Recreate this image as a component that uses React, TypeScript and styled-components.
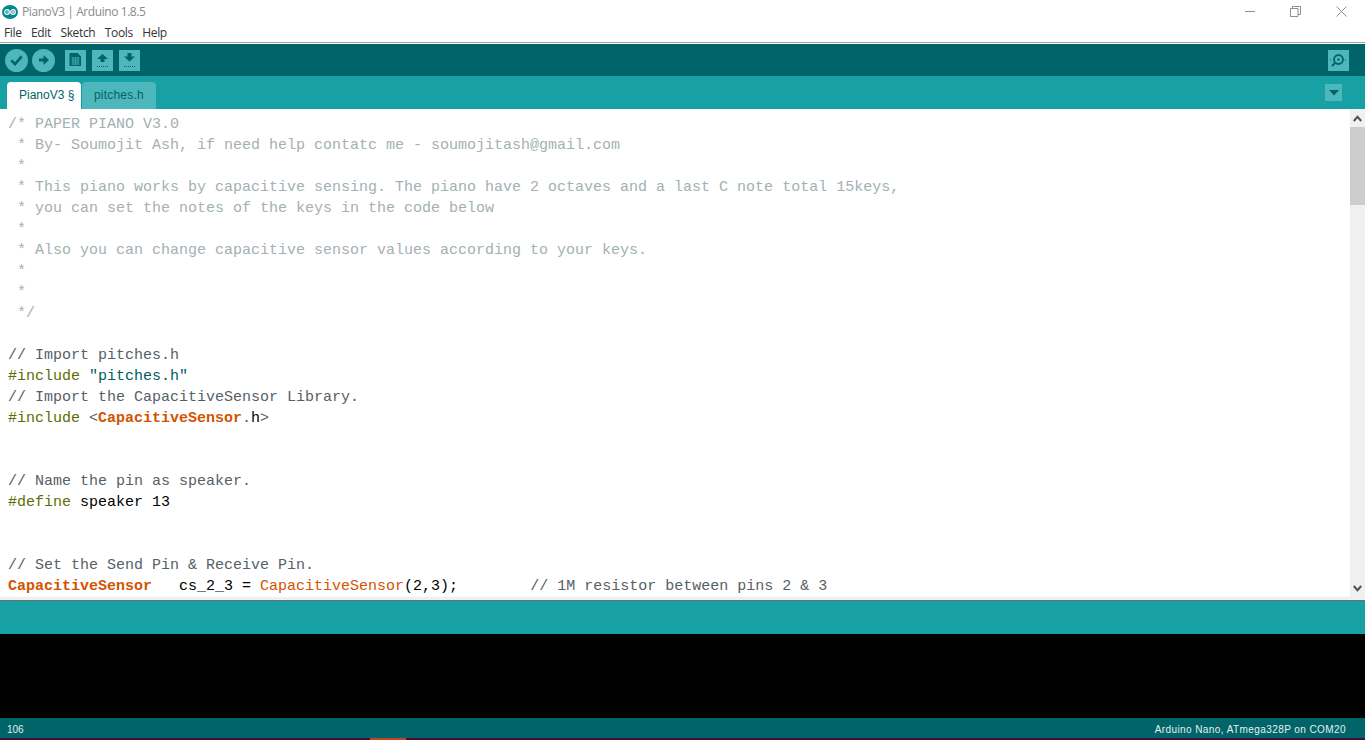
import React from "react";
import styled, { createGlobalStyle } from "styled-components";

const Global = createGlobalStyle`
  html, body { margin: 0; padding: 0; background: #fff; overflow: hidden; }
  #root { width: 1365px; height: 740px; }
`;
const Page = styled.div`
  width: 1365px; height: 740px; display: flex; flex-direction: column; overflow: hidden;
`;
const TitleBar = styled.div`
  height: 22px; display: flex; align-items: center; justify-content: space-between; flex: none;
`;
const TitleLeft = styled.div`
  display: flex; align-items: center; gap: 4px; padding: 1px 0 0 2px;
  font: 12px "Open Sans", "Noto Sans", sans-serif; color: #8a8a8a; letter-spacing: -0.42px;
`;
const WindowButtons = styled.div`
  display: flex; align-items: center; height: 22px; padding-right: 1px;
`;
const WinBtn = styled.div`
  width: 45.500px; height: 22px; display: flex; align-items: center; justify-content: center; color: #8f8f8f;
`;
const MenuBar = styled.div`
  height: 20px; flex: none; display: flex; gap: 9.500px; align-items: center; padding-left: 4px;
  font: 12px "Open Sans", "Noto Sans", sans-serif; color: #333; letter-spacing: -0.36px;
  border-bottom: 1px solid #a0a0a0; box-sizing: content-box;
`;
const Toolbar = styled.div`
  height: 32px; flex: none; margin-top: 1px; background: #006468; display: flex; align-items: center; padding: 0 16px 0 5px;
`;
const Round = styled.div`
  width: 23px; height: 23px; border-radius: 50%; background: #4db7bb; margin-right: 4px;
  display: flex; align-items: center; justify-content: center; flex: none;
`;
const Square = styled.div<{ $first?: boolean; $last?: boolean }>`
  width: 21px; height: 21px; background: #4db7bb;
  margin-right: ${p => (p.$last ? "0" : "6px")}; margin-left: ${p => (p.$first ? "6px" : "0")};
  display: flex; align-items: center; justify-content: center; flex: none;
`;
const Spacer = styled.div`flex: 1;`;
const TabBar = styled.div`
  height: 33px; flex: none; background: #17a1a5; display: flex; align-items: flex-end; padding: 0 23px 0 7px; position: relative;
`;
const Tab = styled.div<{ $active?: boolean }>`
  width: 74px; height: 27px; margin-right: 1px; border-radius: 4px 4px 0 0; box-sizing: border-box;
  padding-left: 12px;
  background: ${p => (p.$active ? "#fff" : "#4db7bb")}; color: #006468;
  font: 12px/26px "Liberation Sans", Arial, sans-serif; letter-spacing: ${p => (p.$active ? "0" : "0.2px")};
`;
const TabMenu = styled.div`
  width: 17px; height: 17px; background: #4db7bb; margin-left: auto; align-self: flex-start; margin-top: 8px;
  display: flex; align-items: center; justify-content: center;
`;
const EditorArea = styled.div`
  height: 488px; flex: none; display: flex; background: #fff; overflow: hidden;
`;
const Code = styled.div`
  flex: 1; padding: 5px 0 0 8px; overflow: hidden;
  font: 15px/21px "Liberation Mono", "Courier New", monospace; color: #000; white-space: pre;
`;
const CodeLine = styled.div`height: 21px;`;
const Comment = styled.span`color: #a3b1b2;`;
const LineComment = styled.span`color: #566166;`;
const Dir = styled.span`color: #5e6d03;`;
const Str = styled.span`color: #005c5f;`;
const Lib = styled.span`color: #d35400; font-weight: 700;`;
const Fn = styled.span`color: #d35400;`;
const Scrollbar = styled.div`
  width: 15px; flex: none; background: #f0f0f0; display: flex; flex-direction: column;
`;
const ScrollBtn = styled.div`
  height: 18px; flex: none; display: flex; align-items: center; justify-content: center;
`;
const Thumb = styled.div`height: 78px; background: #cdcdcd; flex: none;`;
const Track = styled.div`flex: 1;`;
const Divider = styled.div`
  height: 3px; flex: none; background: #f0f0f0; border-bottom: 1px solid #6e6e6e; box-sizing: content-box;
`;
const Status = styled.div`height: 33px; flex: none; background: #17a1a5;`;
const Console = styled.div`height: 84px; flex: none; background: #000;`;
const Footer = styled.div`
  height: 20px; flex: none; background: #006468; display: flex; align-items: center; justify-content: space-between;
  padding: 2px 19px 0 7px; box-sizing: border-box; color: #e4f1f1;
  font: 10px "Liberation Sans", Arial, sans-serif;
`;
const BoardName = styled.span`letter-spacing: 0.42px;`;
const Taskbar = styled.div`
  height: 2px; flex: none; background: #4a0c33; display: flex; padding-left: 370px;
`;
const TaskItem = styled.div`width: 36px; background: #c0432a;`;

const Logo = () => (
  <svg width="16" height="16" viewBox="0 0 16 16">
    <ellipse cx="8" cy="8" rx="8" ry="7" fill="#00878f" />
    <circle cx="5" cy="8" r="2.300" fill="none" stroke="#fff" strokeWidth="1.200" />
    <circle cx="11" cy="8" r="2.300" fill="none" stroke="#fff" strokeWidth="1.200" />
    <path d="M4 8h2M10 8h2M11 7v2" stroke="#fff" strokeWidth="0.800" />
  </svg>
);
const Dots = () => <path d="M5 16.500h11" stroke="#006468" strokeWidth="1" strokeDasharray="1 1" fill="none" />;

const code: React.ReactNode[] = [
  <Comment>{"/* PAPER PIANO V3.0"}</Comment>,
  <Comment>{" * By- Soumojit Ash, if need help contatc me - soumojitash@gmail.com"}</Comment>,
  <Comment>{" *"}</Comment>,
  <Comment>{" * This piano works by capacitive sensing. The piano have 2 octaves and a last C note total 15keys,"}</Comment>,
  <Comment>{" * you can set the notes of the keys in the code below"}</Comment>,
  <Comment>{" *"}</Comment>,
  <Comment>{" * Also you can change capacitive sensor values according to your keys."}</Comment>,
  <Comment>{" *"}</Comment>,
  <Comment>{" *"}</Comment>,
  <Comment>{" */"}</Comment>,
  "",
  <LineComment>{"// Import pitches.h"}</LineComment>,
  <><Dir>#include</Dir> <Str>"pitches.h"</Str></>,
  <LineComment>{"// Import the CapacitiveSensor Library."}</LineComment>,
  <><Dir>#include</Dir> <LineComment>{"<"}</LineComment><Lib>CapacitiveSensor</Lib><LineComment>.</LineComment>h<LineComment>{">"}</LineComment></>,
  "",
  "",
  <LineComment>{"// Name the pin as speaker."}</LineComment>,
  <><Dir>#define</Dir> speaker 13</>,
  "",
  "",
  <LineComment>{"// Set the Send Pin & Receive Pin."}</LineComment>,
  <><Lib>CapacitiveSensor</Lib>   cs_2_3 = <Fn>CapacitiveSensor</Fn>(2,3);        <LineComment>{"// 1M resistor between pins 2 & 3"}</LineComment></>,
];

export default function App() {
  return (
    <Page>
      <Global />
      <TitleBar>
        <TitleLeft><Logo />PianoV3 | Arduino 1.8.5</TitleLeft>
        <WindowButtons>
          <WinBtn><svg width="11" height="11" viewBox="0 0 11 11"><path d="M0 5.500h10" stroke="currentColor" /></svg></WinBtn>
          <WinBtn><svg width="11" height="11" viewBox="0 0 11 11"><path d="M.5 2.500h7.500v8H.5zM2.500 2.500V.5h8v8H8" fill="none" stroke="currentColor" /></svg></WinBtn>
          <WinBtn><svg width="11" height="11" viewBox="0 0 11 11"><path d="M.5.5l10 10M10.500.5l-10 10" stroke="currentColor" /></svg></WinBtn>
        </WindowButtons>
      </TitleBar>
      <MenuBar>
        <span>File</span><span>Edit</span><span>Sketch</span><span>Tools</span><span>Help</span>
      </MenuBar>
      <Toolbar>
        <Round><svg width="13" height="11" viewBox="0 0 13 11"><path d="M1.300 5.300l3.700 3.700 6.700-7.700" fill="none" stroke="#006468" strokeWidth="2.600" /></svg></Round>
        <Round><svg width="10" height="10" viewBox="0 0 10 10"><path d="M0 3.500h4.500V0L10 5 4.500 10V6.500H0z" fill="#006468" /></svg></Round>
        <Square $first><svg width="21" height="21" viewBox="0 0 21 21"><path d="M4.500 3h8l3.500 3.500V16H4.500z" fill="#006468" /><path d="M6.500 8h8M6.500 10h8M6.500 12h8M6.500 14h8M8 7v8M10.500 7v8M13 7v8" stroke="#4db7bb" strokeWidth="0.700" /></svg></Square>
        <Square><svg width="21" height="21" viewBox="0 0 21 21"><path d="M10.500 4l5.500 5h-3.500v3h-4V9H5z" fill="#006468" /><Dots /></svg></Square>
        <Square><svg width="21" height="21" viewBox="0 0 21 21"><path d="M8.500 3h4v3.500H16l-5.500 5-5.500-5h3.500z" fill="#006468" /><Dots /></svg></Square>
        <Spacer />
        <Square $last>
          <svg width="21" height="21" viewBox="0 0 21 21"><circle cx="10.500" cy="9.500" r="4.500" fill="none" stroke="#006468" strokeWidth="1.800" /><circle cx="10.500" cy="9.500" r="1.200" fill="#006468" /><path d="M7 13l-3 3" stroke="#006468" strokeWidth="2.200" /><path d="M2 10h2M17 10h2" stroke="#006468" strokeDasharray="1 1" /></svg>
        </Square>
      </Toolbar>
      <TabBar>
        <Tab $active>PianoV3 §</Tab>
        <Tab>pitches.h</Tab>
        <TabMenu><svg width="10" height="6" viewBox="0 0 10 6"><path d="M0 0h10L5 5.500z" fill="#006468" /></svg></TabMenu>
      </TabBar>
      <EditorArea>
        <Code>{code.map((c, i) => <CodeLine key={i}>{c}</CodeLine>)}</Code>
        <Scrollbar>
          <ScrollBtn><svg width="9" height="7" viewBox="0 0 9 7"><path d="M.8 6l3.700-4.200L8.200 6" fill="none" stroke="#505050" strokeWidth="2" /></svg></ScrollBtn>
          <Thumb />
          <Track />
          <ScrollBtn><svg width="9" height="7" viewBox="0 0 9 7"><path d="M.8 1l3.700 4.200L8.200 1" fill="none" stroke="#505050" strokeWidth="2" /></svg></ScrollBtn>
        </Scrollbar>
      </EditorArea>
      <Divider />
      <Status />
      <Console />
      <Footer><span>106</span><BoardName>Arduino Nano, ATmega328P on COM20</BoardName></Footer>
      <Taskbar><TaskItem /></Taskbar>
    </Page>
  );
}
